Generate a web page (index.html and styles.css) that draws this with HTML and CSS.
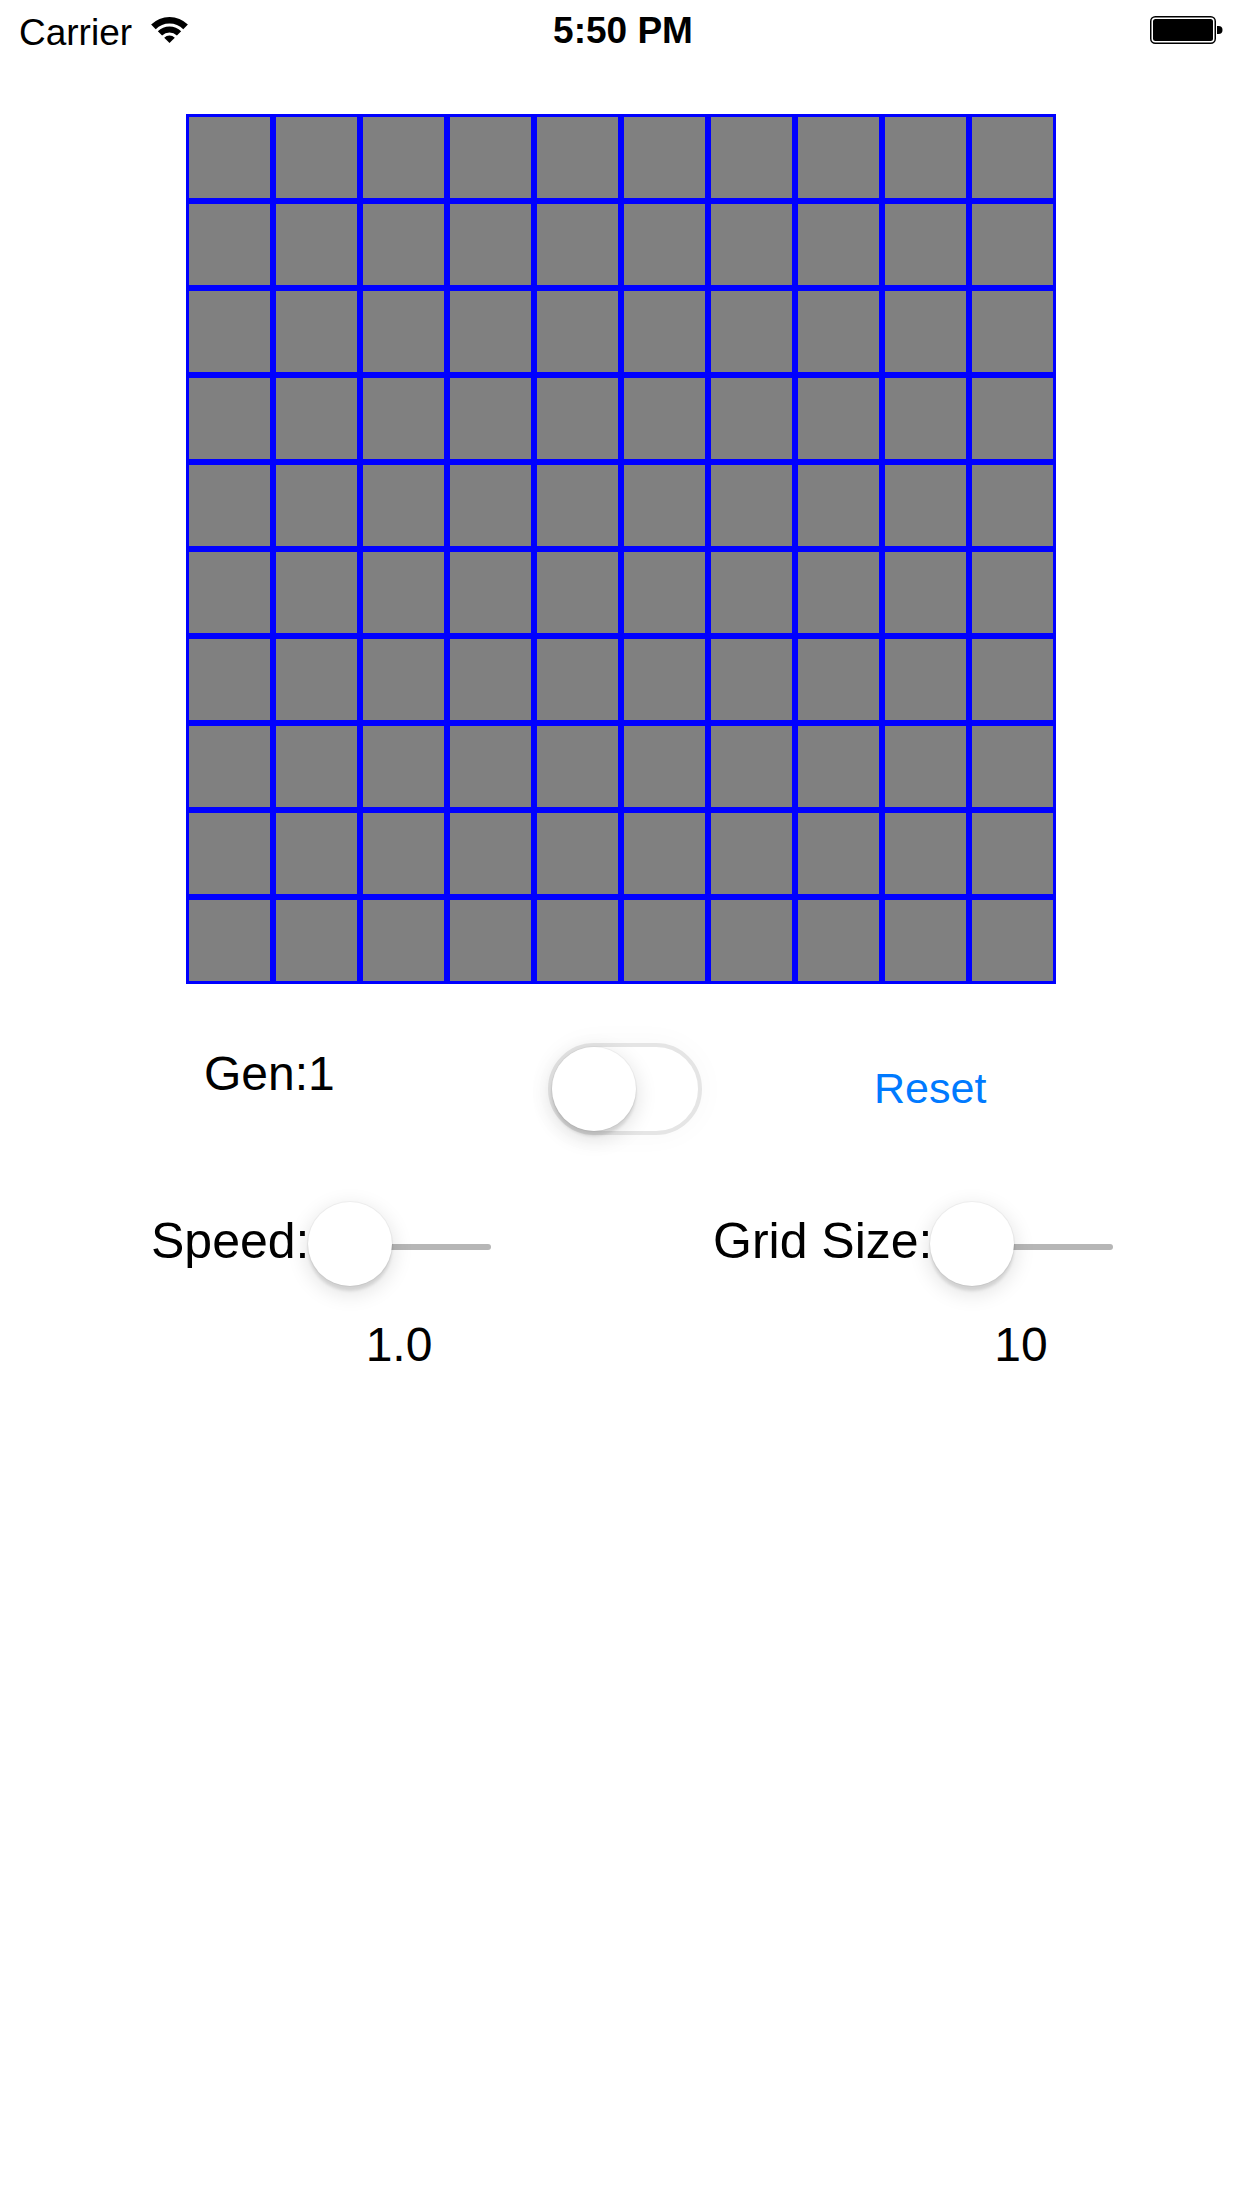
FILE: index.html
```html
<!DOCTYPE html>
<html>
<head>
<meta charset="utf-8">
<title>Game of Life</title>
<link rel="stylesheet" href="styles.css">
</head>
<body>
<div class="screen">
  <header class="statusbar">
    <div class="sb-left">
      <span class="carrier">Carrier</span>
      <svg class="wifi" width="37" height="26" viewBox="0 0 37 26">
        <path d="M0.12 7.62 A26 26 0 0 1 36.88 7.62 L32.29 12.21 A19.5 19.5 0 0 0 4.71 12.21 Z"/>
        <path d="M6.83 14.33 A16.5 16.5 0 0 1 30.17 14.33 L25.92 18.58 A10.5 10.5 0 0 0 11.08 18.58 Z"/>
        <path d="M13.2 20.7 A7.5 7.5 0 0 1 23.8 20.7 L18.5 26 Z"/>
      </svg>
    </div>
    <div class="sb-time">5:50 PM</div>
    <div class="sb-right">
      <svg class="battery" width="74" height="28" viewBox="0 0 74 28">
        <rect x="0.75" y="0.75" width="64.5" height="26.5" rx="4.5" fill="none" stroke="#000" stroke-width="1.5"/>
        <rect x="3" y="3" width="60" height="22" rx="2.5" fill="#000"/>
        <path d="M67 10 h1.5 a4 4 0 0 1 0 8 H67 Z" fill="#000"/>
      </svg>
    </div>
  </header>

  <main class="content">
    <div class="board">
      <div class="cell"></div><div class="cell"></div><div class="cell"></div><div class="cell"></div><div class="cell"></div><div class="cell"></div><div class="cell"></div><div class="cell"></div><div class="cell"></div><div class="cell"></div>
      <div class="cell"></div><div class="cell"></div><div class="cell"></div><div class="cell"></div><div class="cell"></div><div class="cell"></div><div class="cell"></div><div class="cell"></div><div class="cell"></div><div class="cell"></div>
      <div class="cell"></div><div class="cell"></div><div class="cell"></div><div class="cell"></div><div class="cell"></div><div class="cell"></div><div class="cell"></div><div class="cell"></div><div class="cell"></div><div class="cell"></div>
      <div class="cell"></div><div class="cell"></div><div class="cell"></div><div class="cell"></div><div class="cell"></div><div class="cell"></div><div class="cell"></div><div class="cell"></div><div class="cell"></div><div class="cell"></div>
      <div class="cell"></div><div class="cell"></div><div class="cell"></div><div class="cell"></div><div class="cell"></div><div class="cell"></div><div class="cell"></div><div class="cell"></div><div class="cell"></div><div class="cell"></div>
      <div class="cell"></div><div class="cell"></div><div class="cell"></div><div class="cell"></div><div class="cell"></div><div class="cell"></div><div class="cell"></div><div class="cell"></div><div class="cell"></div><div class="cell"></div>
      <div class="cell"></div><div class="cell"></div><div class="cell"></div><div class="cell"></div><div class="cell"></div><div class="cell"></div><div class="cell"></div><div class="cell"></div><div class="cell"></div><div class="cell"></div>
      <div class="cell"></div><div class="cell"></div><div class="cell"></div><div class="cell"></div><div class="cell"></div><div class="cell"></div><div class="cell"></div><div class="cell"></div><div class="cell"></div><div class="cell"></div>
      <div class="cell"></div><div class="cell"></div><div class="cell"></div><div class="cell"></div><div class="cell"></div><div class="cell"></div><div class="cell"></div><div class="cell"></div><div class="cell"></div><div class="cell"></div>
      <div class="cell"></div><div class="cell"></div><div class="cell"></div><div class="cell"></div><div class="cell"></div><div class="cell"></div><div class="cell"></div><div class="cell"></div><div class="cell"></div><div class="cell"></div>
    </div>

    <div class="row-main">
      <div class="gen">Gen:1</div>
      <div class="switch"><div class="knob"></div></div>
      <div class="reset">Reset</div>
    </div>

    <div class="row-sliders">
      <div class="label label-speed">Speed:</div>
      <div class="slider"><div class="thumb"></div><div class="track"></div></div>
      <div class="label label-grid">Grid Size:</div>
      <div class="slider"><div class="thumb"></div><div class="track"></div></div>
    </div>

    <div class="row-values">
      <div class="value value-speed">1.0</div>
      <div class="value value-grid">10</div>
    </div>
  </main>
</div>
</body>
</html>
```

FILE: styles.css
```css
html, body {
  margin: 0;
  padding: 0;
  background: #ffffff;
}

.screen {
  width: 1242px;
  height: 2208px;
  font-family: "Liberation Sans", Arial, sans-serif;
  color: #000;
  overflow: hidden;
}

/* Status bar */
.statusbar {
  height: 60px;
  display: grid;
  grid-template-columns: 1fr auto 1fr;
  align-items: start;
}

.sb-left {
  display: flex;
  align-items: flex-start;
  padding-left: 19px;
}

.carrier {
  font-size: 37px;
  line-height: 37px;
  margin-top: 14px;
}

.wifi {
  margin-left: 19px;
  margin-top: 17px;
  fill: #000;
}

.sb-time {
  font-size: 37px;
  line-height: 37px;
  font-weight: bold;
  margin-top: 12px;
  padding-left: 4px;
}

.sb-right {
  display: flex;
  justify-content: flex-end;
  padding-right: 18px;
}

.battery {
  margin-top: 16px;
}

/* Board */
.board {
  width: 870px;
  margin: 54px auto 0;
  display: grid;
  grid-template-columns: repeat(10, 87px);
  grid-auto-rows: 87px;
}

.cell {
  box-sizing: border-box;
  border: 3px solid #0000ff;
  background: #808080;
}

/* Gen / switch / reset */
.row-main {
  display: flex;
  align-items: flex-start;
  margin-top: 59px;
  padding-left: 204px;
  height: 92px;
}

.gen {
  width: 344px;
  font-size: 48px;
  line-height: 48px;
  margin-top: 7px;
}

.switch {
  box-sizing: border-box;
  width: 154px;
  height: 92px;
  border: 4px solid #e5e5e5;
  border-radius: 46px;
  background: #fff;
  display: flex;
  align-items: center;
  box-shadow: 0 0 30px rgba(0, 0, 0, 0.03);
}

.knob {
  width: 84px;
  height: 84px;
  border-radius: 50%;
  background: #fff;
  box-shadow: 0 0 0 1px rgba(0, 0, 0, 0.04), 0 5px 3px rgba(0, 0, 0, 0.1), 0 6px 22px rgba(0, 0, 0, 0.14);
}

.reset {
  margin-left: 172px;
  font-size: 43px;
  line-height: 43px;
  margin-top: 24px;
  color: #007aff;
}

/* Sliders */
.row-sliders {
  display: flex;
  align-items: flex-start;
  margin-top: 67px;
  padding-left: 151px;
  height: 84px;
}

.label {
  font-size: 50px;
  line-height: 50px;
  margin-top: 14px;
  white-space: nowrap;
}

.label-speed {
  width: 157px;
}

.label-grid {
  width: 217px;
  margin-left: 222px;
}

.slider {
  width: 183px;
  height: 84px;
  display: flex;
  align-items: center;
}

.thumb {
  position: relative;
  z-index: 1;
  flex: none;
  width: 84px;
  height: 84px;
  border-radius: 50%;
  background: #fff;
  box-shadow: 0 0 0 1px rgba(0, 0, 0, 0.04), 0 5px 3px rgba(0, 0, 0, 0.1), 0 6px 22px rgba(0, 0, 0, 0.14);
}

.track {
  flex: 1;
  height: 6px;
  margin-left: -42px;
  margin-top: 6px;
  border-radius: 3px;
  background: #b6b6b6;
}

/* Values */
.row-values {
  display: flex;
  margin-top: 34px;
  padding-left: 349px;
}

.value {
  width: 100px;
  text-align: center;
  font-size: 48px;
  line-height: 50px;
}

.value-grid {
  margin-left: 522px;
}
```
